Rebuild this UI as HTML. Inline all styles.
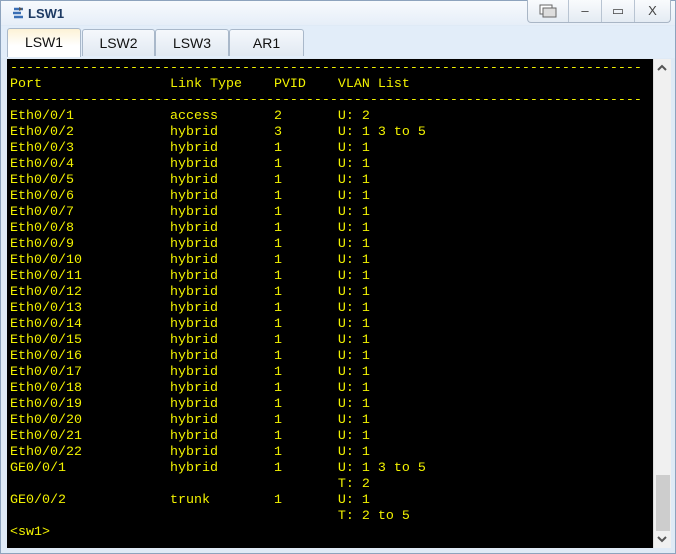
<!DOCTYPE html><html><head><style>
body{margin:0;width:676px;height:554px;overflow:hidden;background:#c5d3e3;font-family:"Liberation Sans",sans-serif;position:relative}
.win{position:absolute;left:0;top:0;width:674px;height:552px;border:1px solid #8da3bd;background:#dfeaf6}
.title{position:absolute;left:0;top:0;width:674px;height:24px;background:linear-gradient(#f7fafd,#e6eef8)}
.title span{position:absolute;left:27px;top:5px;font-size:13px;font-weight:bold;color:#1d3a63}
.ctrl{position:absolute;top:-1px;left:526px;width:142px;height:22px;border:1px solid #a9b6c6;border-top:none;border-radius:0 0 4px 4px;background:linear-gradient(#f9fbfd,#e4ebf3)}
.ctrl div{position:absolute;top:0;height:22px;border-left:1px solid #b8c4d2;width:32px;font-size:13px;color:#444;text-align:center;line-height:22px}
.tabs{position:absolute;left:0;top:25px;width:674px;height:32px;background:#e2edf9}
.tab{position:absolute;top:3px;height:26px;border:1px solid #a9b8ca;border-bottom:none;border-radius:3px 3px 0 0;background:linear-gradient(#f5f8fc,#e1e9f2);font-size:14px;text-align:center;line-height:26px;color:#111}
.tab.a{background:linear-gradient(#fdf2d6,#fff 60%);height:28px;top:2px}
.term{position:absolute;left:6px;top:58px;width:646px;height:489px;background:#000;overflow:hidden}
pre{margin:0;position:absolute;left:3px;top:2px;font-family:"Liberation Mono",monospace;font-size:13.33px;line-height:16px;color:#f2f200}
.sb{position:absolute;left:652px;top:58px;width:17px;height:489px;background:#f0f0f0;border-left:1px solid #ddd}
.thumb{position:absolute;left:2px;top:416px;width:14px;height:56px;background:#cdcdcd}
</style></head><body><div class="win">
<div class="title"><svg style="position:absolute;left:9px;top:4px" width="16" height="16"><path d="M4 4h9M3 8h8M4 12h9" stroke="#3a6fb5" stroke-width="2.5"/><path d="M9 2l4 2-4 2" fill="#555"/></svg><span>LSW1</span></div>
<div class="ctrl"><div style="left:0;border:none;width:40px"><svg width="20" height="14" style="margin-top:4px"><rect x="2" y="1" width="12" height="9" fill="#fff" stroke="#666"/><rect x="5" y="4" width="13" height="9" fill="#ddd" stroke="#666"/></svg></div><div style="left:40px">–</div><div style="left:73px">▭</div><div style="left:106px;width:35px">X</div></div>
<div class="tabs">
<div class="tab a" style="left:6px;width:72px">LSW1</div>
<div class="tab" style="left:81px;width:71px">LSW2</div>
<div class="tab" style="left:154px;width:72px">LSW3</div>
<div class="tab" style="left:228px;width:73px">AR1</div>
</div>
<div class="term"><pre>-------------------------------------------------------------------------------
Port                Link Type    PVID    VLAN List
-------------------------------------------------------------------------------
Eth0/0/1            access       2       U: 2
Eth0/0/2            hybrid       3       U: 1 3 to 5
Eth0/0/3            hybrid       1       U: 1
Eth0/0/4            hybrid       1       U: 1
Eth0/0/5            hybrid       1       U: 1
Eth0/0/6            hybrid       1       U: 1
Eth0/0/7            hybrid       1       U: 1
Eth0/0/8            hybrid       1       U: 1
Eth0/0/9            hybrid       1       U: 1
Eth0/0/10           hybrid       1       U: 1
Eth0/0/11           hybrid       1       U: 1
Eth0/0/12           hybrid       1       U: 1
Eth0/0/13           hybrid       1       U: 1
Eth0/0/14           hybrid       1       U: 1
Eth0/0/15           hybrid       1       U: 1
Eth0/0/16           hybrid       1       U: 1
Eth0/0/17           hybrid       1       U: 1
Eth0/0/18           hybrid       1       U: 1
Eth0/0/19           hybrid       1       U: 1
Eth0/0/20           hybrid       1       U: 1
Eth0/0/21           hybrid       1       U: 1
Eth0/0/22           hybrid       1       U: 1
GE0/0/1             hybrid       1       U: 1 3 to 5
                                         T: 2
GE0/0/2             trunk        1       U: 1
                                         T: 2 to 5
&lt;sw1&gt;</pre></div>
<div class="sb"><svg style="position:absolute;left:3px;top:5px" width="10" height="8"><path d="M1 6l4-4 4 4" stroke="#555" stroke-width="2" fill="none"/></svg><div class="thumb"></div><svg style="position:absolute;left:3px;top:476px" width="10" height="8"><path d="M1 2l4 4 4-4" stroke="#555" stroke-width="2" fill="none"/></svg></div>
</div></body></html>
